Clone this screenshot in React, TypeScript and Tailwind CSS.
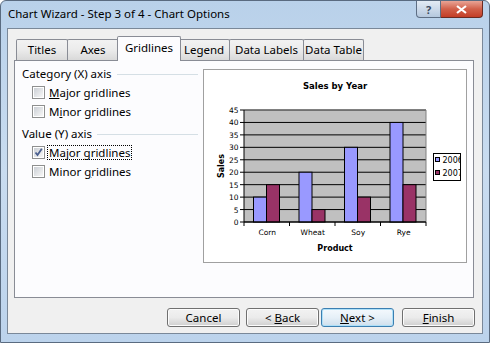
import React from "react";

const FONT = { fontFamily: '"Noto Sans", "Open Sans", sans-serif' };

function CheckBox({ checked }: { checked?: boolean }) {
  return (
    <div className="w-[13px] h-[13px] border border-[#8e8f8f] bg-white p-px shrink-0">
      <div className="w-full h-full bg-gradient-to-br from-[#cbcfd5] to-[#f7f7f7] relative">
        {checked && (
          <svg width="11" height="11" viewBox="0 0 11 11" className="absolute -left-px -top-px">
            <path d="M2.5 5.5 L4.5 8 L8.8 1.8" fill="none" stroke="#4a5f8f" strokeWidth="1.8" />
          </svg>
        )}
      </div>
    </div>
  );
}

function Row({ children, checked, focus }: { children: React.ReactNode; checked?: boolean; focus?: boolean }) {
  return (
    <div className="h-[19px] flex items-center pl-[10px]">
      <CheckBox checked={checked} />
      <span
        className={
          "ml-[2px] px-px leading-[13px] text-[11.5px] text-black whitespace-nowrap " +
          (focus ? "border border-dotted border-black" : "border border-transparent")
        }
      >
        {children}
      </span>
    </div>
  );
}

function Header({ children }: { children: React.ReactNode }) {
  return (
    <div className="h-[19px] flex items-center text-[11.5px] text-black whitespace-nowrap">
      <span>{children}</span>
      <div className="flex-1 h-px bg-[#d5dfe5] ml-[5px] mt-[1px]" />
    </div>
  );
}

function Tab({ label, w, selected }: { label: string; w: number; selected?: boolean }) {
  if (selected) {
    return (
      <div
        className="relative z-10 -mb-px -mx-[2px] h-[25px] border border-b-0 border-[#898c95] bg-[#fcfcfe] rounded-t-[2px] flex items-center justify-center text-[11.5px] text-black pb-[2px] whitespace-nowrap"
        style={{ width: w }}
      >
        {label}
      </div>
    );
  }
  return (
    <div
      className="h-[21px] border border-b-0 border-[#898c95] -ml-px first:ml-0 bg-gradient-to-b from-[#f2f2f2] via-[#ebebeb] to-[#d9d9d9] rounded-t-[2px] flex items-center justify-center text-[11.5px] text-black whitespace-nowrap"
      style={{ width: w }}
    >
      {label}
    </div>
  );
}

function Btn({ children, def }: { children: React.ReactNode; def?: boolean }) {
  return (
    <div
      className={
        "w-[73px] h-[19px] rounded-[3px] border flex items-center justify-center text-[11.5px] text-black whitespace-pre " +
        (def
          ? "border-[#3c7fb1] bg-gradient-to-b from-[#f4f9fd] via-[#e6f0f8] to-[#cfdfec] shadow-[inset_0_0_0_1px_#aee0f8]"
          : "border-[#707070] bg-gradient-to-b from-[#f2f2f2] via-[#ebebeb] to-[#cfcfcf] shadow-[inset_0_0_0_1px_#fcfcfc]")
      }
    >
      {children}
    </div>
  );
}

function Chart() {
  const px = 40;
  const py = 40;
  const pw = 182;
  const ph = 112;
  const unit = ph / 45;
  const cats = [
    { n: "Corn", a: 10, b: 15 },
    { n: "Wheat", a: 20, b: 5 },
    { n: "Soy", a: 30, b: 10 },
    { n: "Rye", a: 40, b: 15 },
  ];
  const cw = pw / 4;
  const f = { fontFamily: '"DejaVu Sans", Verdana, sans-serif' };
  return (
    <svg width="262" height="192" viewBox="0 0 262 192" style={f}>
      <defs>
        <clipPath id="lg">
          <rect x="229" y="83" width="27" height="27" />
        </clipPath>
      </defs>
      <text x="131" y="18.5" textAnchor="middle" fontSize="8.5" fontWeight="bold" fill="#000">
        Sales by Year
      </text>
      <rect x={px} y={py} width={pw} height={ph} fill="#c0c0c0" />
      {Array.from({ length: 10 }).map((_, i) => {
        const y = py + ph - i * 5 * unit;
        return (
          <g key={i}>
            <line x1={px} x2={px + pw} y1={y} y2={y} stroke="#000" strokeWidth="1" />
            <line x1={px - 4} x2={px} y1={y} y2={y} stroke="#000" strokeWidth="1" />
            <text x={px - 5.5} y={y + 3} textAnchor="end" fontSize="7.5" fill="#000">
              {i * 5}
            </text>
          </g>
        );
      })}
      <line x1={px + pw} x2={px + pw} y1={py} y2={py + ph} stroke="#808080" strokeWidth="1" />
      <line x1={px} x2={px + pw} y1={py} y2={py} stroke="#808080" strokeWidth="1" />
      {cats.map((c, i) => {
        const cs = px + i * cw;
        const ha = c.a * unit;
        const hb = c.b * unit;
        return (
          <g key={c.n}>
            <rect x={cs + 9.5} y={py + ph - ha} width={13} height={ha} fill="#9999ff" stroke="#000" strokeWidth="1" />
            <rect x={cs + 22.5} y={py + ph - hb} width={13} height={hb} fill="#993366" stroke="#000" strokeWidth="1" />
            <text x={cs + cw / 2 + 0.5} y={165} textAnchor="middle" fontSize="7.5" fill="#000">
              {c.n}
            </text>
          </g>
        );
      })}
      {Array.from({ length: 5 }).map((_, i) => (
        <line key={i} x1={px + i * cw} x2={px + i * cw} y1={py + ph} y2={py + ph + 4} stroke="#000" strokeWidth="1" />
      ))}
      <line x1={px} x2={px} y1={py} y2={py + ph} stroke="#000" strokeWidth="1" />
      <line x1={px} x2={px + pw} y1={py + ph} y2={py + ph} stroke="#000" strokeWidth="1" />
      <text x="131" y="180.5" textAnchor="middle" fontSize="8" fontWeight="bold" fill="#000">
        Product
      </text>
      <text
        x="0"
        y="0"
        textAnchor="middle"
        fontSize="8"
        fontWeight="bold"
        fill="#000"
        transform="translate(19.5 96) rotate(-90)"
      >
        Sales
      </text>
      <rect x="229.5" y="83.5" width="27" height="27" fill="#fff" stroke="#000" strokeWidth="1" />
      <g clipPath="url(#lg)">
        <rect x="231.5" y="87.5" width="4" height="4" fill="#9999ff" stroke="#000" strokeWidth="1" />
        <text x="238.5" y="92.5" fontSize="8" fill="#000">
          2006
        </text>
        <rect x="231.5" y="100.5" width="4" height="4" fill="#993366" stroke="#000" strokeWidth="1" />
        <text x="238.5" y="105.5" fontSize="8" fill="#000">
          2007
        </text>
      </g>
    </svg>
  );
}

export default function App() {
  return (
    <div
      className="w-[490px] h-[343px] flex flex-col overflow-hidden rounded-t-[6px] border border-[#5a6b80] bg-gradient-to-b from-[#b9d1ea] via-[#c9dcf0] to-[#bcd3ec]"
      style={FONT}
    >
      <div className="h-[27px] flex items-start relative">
        <div className="pl-[7px] pt-[4px] text-[11.5px] text-black leading-[18px] whitespace-nowrap">
          Chart Wizard - Step 3 of 4 - Chart Options
        </div>
        <div className="ml-auto mr-[6px] flex">
          <div className="w-[25px] h-[17px] border border-[#5e6e84] border-t-0 rounded-bl-[4px] bg-gradient-to-b from-[#e3ebf4] via-[#cddaea] to-[#b5c8de] flex items-center justify-center text-[11px] text-[#3b4a5e] font-bold leading-none">
            ?
          </div>
          <div className="w-[42px] h-[17px] border border-[#6b2a22] border-t-0 border-l-0 rounded-br-[4px] bg-gradient-to-b from-[#e8a496] via-[#d1604a] to-[#c33d26] flex items-center justify-center">
            <svg width="11" height="9" viewBox="0 0 11 9">
              <path d="M1 1 L10 8 M10 1 L1 8" stroke="#fff" strokeWidth="2.2" />
            </svg>
          </div>
        </div>
      </div>
      <div className="flex-1 flex px-[6px]">
        <div className="flex-1 border border-[#7a8899] bg-[#f0f0f0] flex flex-col px-[6px] pt-[7px]">
          <div className="flex items-end h-[24px] pl-[2px]">
            <Tab label="Titles" w={52} />
            <Tab label="Axes" w={52} />
            <Tab label="Gridlines" w={64} selected />
            <Tab label="Legend" w={52} />
            <Tab label="Data Labels" w={75} />
            <Tab label="Data Table" w={61} />
          </div>
          <div className="w-[460px] h-[238px] border border-[#898c95] bg-[#fcfcfe] flex pl-[7px] pt-[3px]">
            <div className="w-[176px] flex flex-col">
              <Header>Category (X) axis</Header>
              <Row>
                <span className="underline">M</span>ajor gridlines
              </Row>
              <Row>
                M<span className="underline">i</span>nor gridlines
              </Row>
              <div className="h-[3px]" />
              <Header>Value (Y) axis</Header>
              <Row checked focus>
                Ma<span className="underline">j</span>or gridlines
              </Row>
              <Row>
                Minor <span className="underline">g</span>ridlines
              </Row>
            </div>
            <div className="ml-[5px] mt-[5px] w-[264px] h-[194px] border border-[#a0a0a0] bg-white">
              <Chart />
            </div>
          </div>
          <div className="flex mt-[10px] pl-[153px]">
            <Btn>Cancel</Btn>
            <div className="w-[6px]" />
            <Btn>
              {"< "}
              <span className="underline">B</span>
              {"ack"}
            </Btn>
            <div className="w-[2px]" />
            <Btn def>
              <span className="underline">N</span>
              {"ext >"}
            </Btn>
            <div className="w-[8px]" />
            <Btn>
              <span className="underline">F</span>inish
            </Btn>
          </div>
        </div>
      </div>
      <div className="h-[8px]" />
    </div>
  );
}
